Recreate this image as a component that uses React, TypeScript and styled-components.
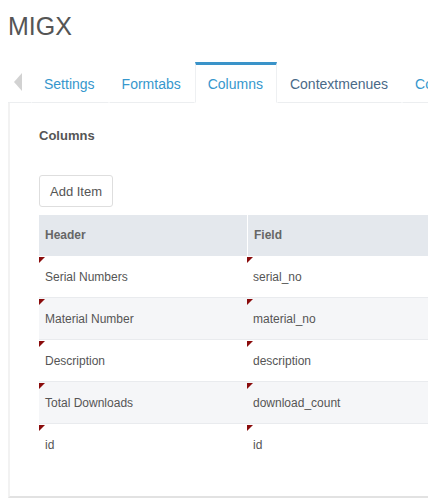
import styled, { createGlobalStyle } from "styled-components";

const GlobalStyle = createGlobalStyle`
  html, body {
    margin: 0;
    padding: 0;
    background: #fff;
    font-family: "Liberation Sans", Arial, sans-serif;
    overflow: hidden;
  }
`;

const tabs = ["Settings", "Formtabs", "Columns", "Contextmenues", "Configurations"];

const rows = [
  ["Serial Numbers", "serial_no"],
  ["Material Number", "material_no"],
  ["Description", "description"],
  ["Total Downloads", "download_count"],
  ["id", "id"],
];

function App() {
  return (
    <Page>
      <GlobalStyle />
      <Title>MIGX</Title>
      <TabStrip>
        <Arrow />
        {tabs.map((t) => (
          <Tab key={t} active={t === "Columns"} dark={t === "Contextmenues"}>
            {t}
          </Tab>
        ))}
      </TabStrip>
      <Panel>
        <Label>Columns</Label>
        <Button>Add Item</Button>
        <Table>
          <HeadRow>
            <HeadCell>Header</HeadCell>
            <HeadCell divider>Field</HeadCell>
          </HeadRow>
          {rows.map(([h, f], i) => (
            <Row key={f} striped={i % 2 === 1}>
              <Cell>{h}</Cell>
              <Cell>{f}</Cell>
            </Row>
          ))}
        </Table>
      </Panel>
    </Page>
  );
}

export default App;

const Page = styled.div`
  width: 428px;
  height: 498px;
  overflow: hidden;
  padding-left: 8px;
  box-sizing: border-box;
`;

const Title = styled.h1`
  margin: 0;
  padding-top: 11px;
  height: 50px;
  box-sizing: border-box;
  font-size: 25px;
  font-weight: normal;
  color: #555;
  line-height: 30px;
`;

const TabStrip = styled.div`
  display: flex;
  align-items: flex-end;
  height: 41px;
  margin-top: 11px;
  border-bottom: 1px solid #eceef0;
  width: 700px;
`;

const Arrow = styled.span`
  width: 0;
  height: 0;
  margin: 0 9px 11px 6px;
  border-top: 9px solid transparent;
  border-bottom: 9px solid transparent;
  border-right: 8px solid #d2d2d2;
`;

const Tab = styled.div<{ active?: boolean; dark?: boolean }>`
  height: 41px;
  box-sizing: border-box;
  padding: 0 13px 0 12px;
  margin-bottom: -1px;
  display: flex;
  align-items: center;
  font-size: 14px;
  padding-top: ${(p) => (p.active ? "0" : "3px")};
  color: ${(p) => (p.dark ? "#4a6a88" : "#3697cd")};
  background: #fff;
  border-left: 1px solid ${(p) => (p.active ? "#eef0f2" : "transparent")};
  border-right: 1px solid ${(p) => (p.active ? "#eef0f2" : "transparent")};
  border-top: ${(p) => (p.active ? "3px solid #3a93c9" : "0")};
  border-bottom: 1px solid ${(p) => (p.active ? "#fff" : "#eceef0")};
`;

const Panel = styled.div`
  height: 395px;
  box-sizing: border-box;
  width: 700px;
  border-left: 2px solid #f2f2f2;
  border-bottom: 2px solid #e2e2e2;
  padding: 25px 0 0 29px;
`;

const Label = styled.div`
  font-size: 13px;
  font-weight: bold;
  color: #555;
  height: 47px;
`;

const Button = styled.button`
  font-family: inherit;
  height: 32px;
  padding: 0 10px;
  background: #fff;
  border: 1px solid #dedede;
  border-radius: 3px;
  font-size: 13px;
  color: #555;
  margin-bottom: 8px;
`;

const Table = styled.div`
  width: 640px;
`;

const HeadRow = styled.div`
  display: grid;
  grid-template-columns: 208px 1fr;
  height: 41px;
  background: #e4e8ed;
`;

const HeadCell = styled.div<{ divider?: boolean }>`
  display: flex;
  align-items: center;
  padding-left: 6px;
  padding-bottom: 1px;
  font-size: 12px;
  font-weight: bold;
  color: #666;
  border-left: ${(p) => (p.divider ? "1px solid #fff" : "0")};
`;

const Row = styled.div<{ striped?: boolean }>`
  display: grid;
  grid-template-columns: 208px 1fr;
  height: 42px;
  box-sizing: border-box;
  border-bottom: 1px solid #e9ebee;
  background: ${(p) => (p.striped ? "#f5f6f8" : "#fff")};

  &:last-child {
    border-bottom: 0;
  }
`;

const Cell = styled.div`
  position: relative;
  display: flex;
  align-items: center;
  padding-left: 6px;
  font-size: 12px;
  color: #555;

  &::before {
    content: "";
    position: absolute;
    top: 1px;
    left: 0;
    border-top: 6px solid #8a0c0c;
    border-right: 6px solid transparent;
  }
`;
